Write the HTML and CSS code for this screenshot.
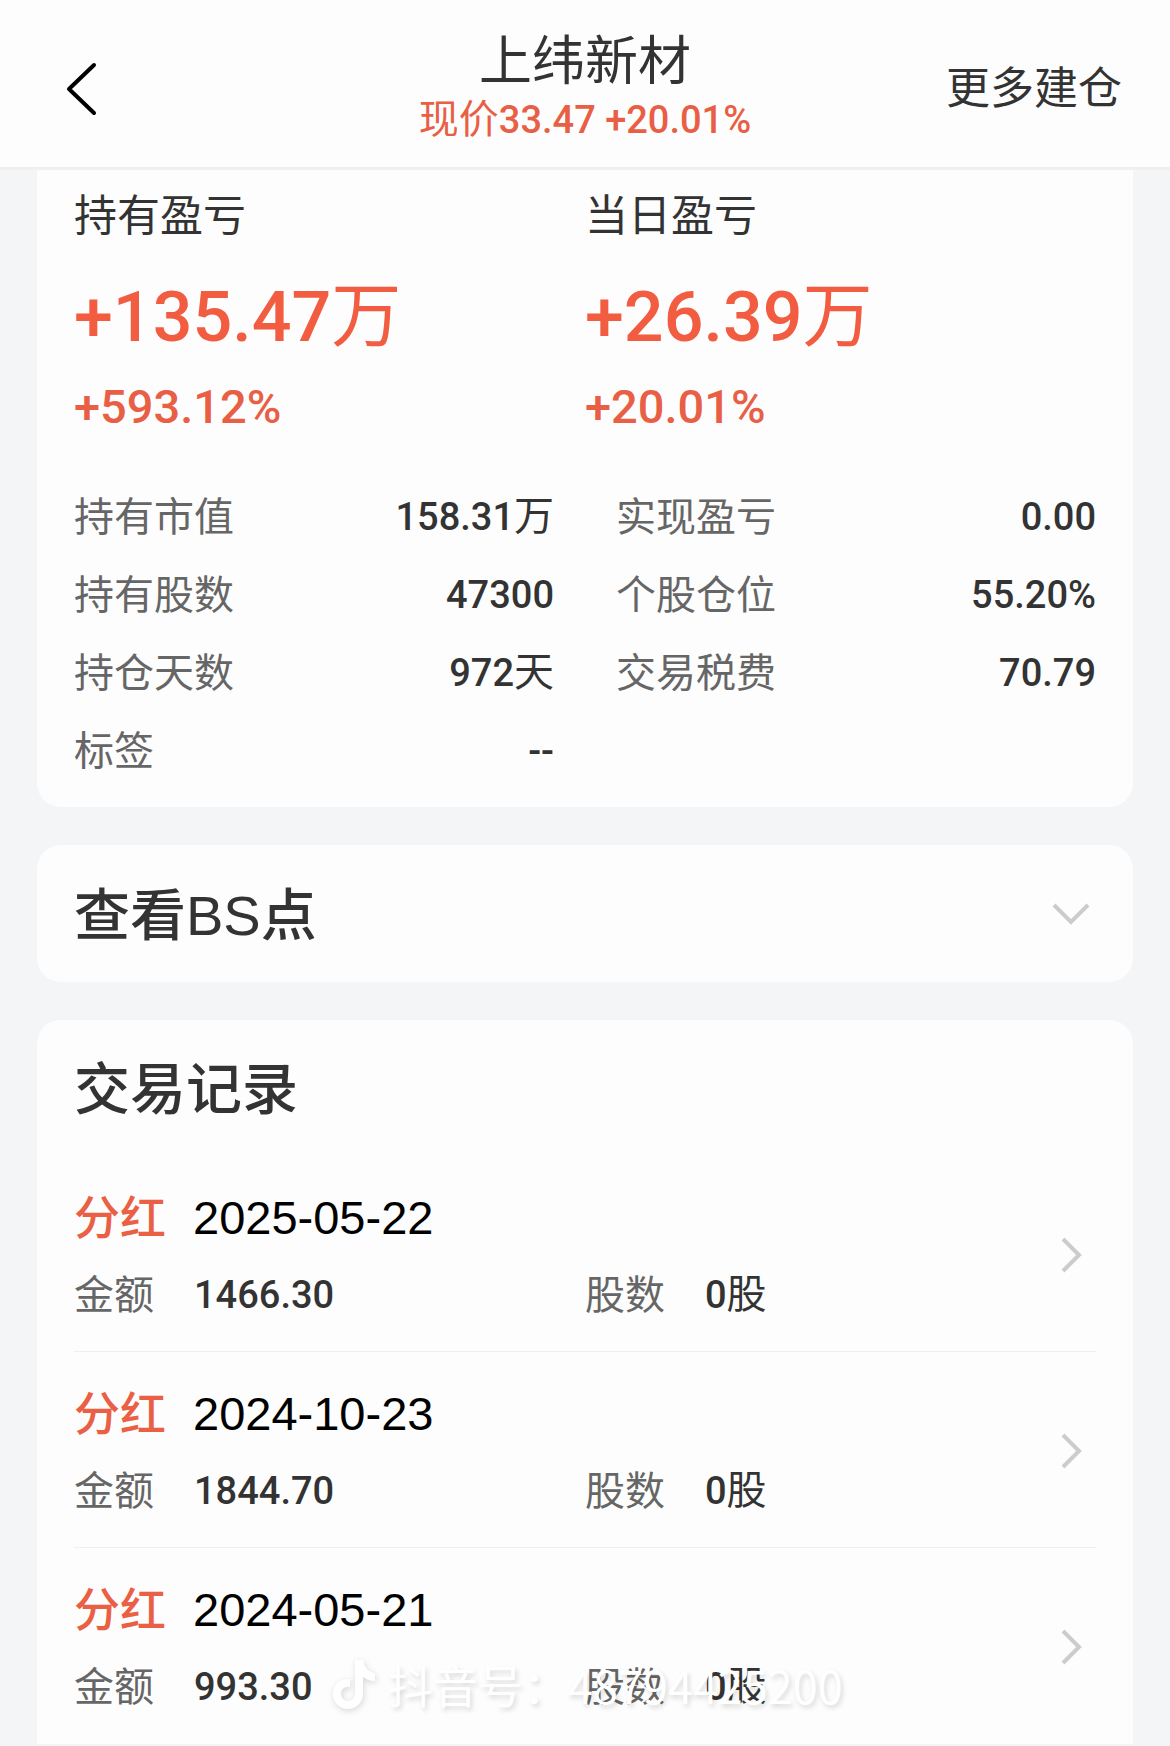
FILE: index.html
```html
<!DOCTYPE html>
<html lang="zh-CN">
<head>
  <meta charset="UTF-8">
  <meta name="viewport" content="width=device-width, initial-scale=1.0">
  <title>上纬新材</title>
  <link rel="stylesheet" href="styles.css">
</head>
<body>
  <header class="navbar">
    <button class="back" type="button" aria-label="返回">
      <svg width="34" height="54" viewBox="0 0 34 54"><path d="M30 3 L5 27 L30 51"/></svg>
    </button>
    <div class="heading">
      <h1>上纬新材</h1>
      <p class="price">现价<span class="num">33.47 +20.01%</span></p>
    </div>
    <button class="more" type="button">更多建仓</button>
  </header>

  <main>
    <section class="card summary">
      <div class="profit">
        <div>
          <h2>持有盈亏</h2>
          <p class="amount">+135.47<span class="unit">万</span></p>
          <p class="rate">+593.12%</p>
        </div>
        <div>
          <h2>当日盈亏</h2>
          <p class="amount">+26.39<span class="unit">万</span></p>
          <p class="rate">+20.01%</p>
        </div>
      </div>
      <dl class="details">
        <div><dt>持有市值</dt><dd>158.31<span class="unit">万</span></dd></div>
        <div><dt>实现盈亏</dt><dd>0.00</dd></div>
        <div><dt>持有股数</dt><dd>47300</dd></div>
        <div><dt>个股仓位</dt><dd>55.20%</dd></div>
        <div><dt>持仓天数</dt><dd>972<span class="unit">天</span></dd></div>
        <div><dt>交易税费</dt><dd>70.79</dd></div>
        <div><dt>标签</dt><dd>--</dd></div>
      </dl>
    </section>

    <button class="card toggle" type="button" aria-expanded="false">
      <span class="card-title">查看BS点</span>
      <svg class="arrow" width="40" height="24" viewBox="0 0 40 24"><path d="M3 3 L20 20 L37 3"/></svg>
    </button>

    <section class="card records">
      <h2 class="card-title">交易记录</h2>
      <ul>
        <li>
          <a href="#">
            <span class="line"><b class="tag">分红</b><time class="date">2025-05-22</time></span>
            <span class="line">
              <span class="pair"><span class="key">金额</span><span class="val">1466.30</span></span>
              <span class="pair"><span class="key">股数</span><span class="val">0<span class="unit">股</span></span></span>
            </span>
            <svg class="arrow" width="24" height="38" viewBox="0 0 24 38"><path d="M4 3 L20 19 L4 35"/></svg>
          </a>
        </li>
        <li>
          <a href="#">
            <span class="line"><b class="tag">分红</b><time class="date">2024-10-23</time></span>
            <span class="line">
              <span class="pair"><span class="key">金额</span><span class="val">1844.70</span></span>
              <span class="pair"><span class="key">股数</span><span class="val">0<span class="unit">股</span></span></span>
            </span>
            <svg class="arrow" width="24" height="38" viewBox="0 0 24 38"><path d="M4 3 L20 19 L4 35"/></svg>
          </a>
        </li>
        <li>
          <a href="#">
            <span class="line"><b class="tag">分红</b><time class="date">2024-05-21</time></span>
            <span class="line">
              <span class="pair"><span class="key">金额</span><span class="val">993.30</span></span>
              <span class="pair"><span class="key">股数</span><span class="val">0<span class="unit">股</span></span></span>
            </span>
            <svg class="arrow" width="24" height="38" viewBox="0 0 24 38"><path d="M4 3 L20 19 L4 35"/></svg>
          </a>
          <!-- 水印 -->
          <div class="watermark">
            <svg width="44" height="52" viewBox="0 0 44 52"><path d="M23 1 H31 C32 8 36 13 43 14 V22 C38 22 34 20 31 18 V34 C31 44 24 50 15.500 50 C7 50 1 43 1 35 C1 26 8 19 18 20 V28 C13 27 9 30 9 35 C9 39 12 42 16 42 C20 42 23 39 23 34 Z"/></svg>
            <span>抖音号：48794425200</span>
          </div>
        </li>
      </ul>
    </section>
  </main>
</body>
</html>
```
FILE: styles.css
```css
* { box-sizing: border-box; }
body {
  margin: 0;
  background: #f3f5f7;
  color: #333;
  font-family: "Liberation Sans", "Noto Sans CJK SC", sans-serif;
}
h1, h2, p, dl, dd, ul { margin: 0; padding: 0; font-weight: 400; }
ul { list-style: none; }
button { border: 0; padding: 0; background: none; color: inherit; font-family: inherit; cursor: pointer; }
svg { display: block; fill: none; }

/* 顶部导航 */
.navbar {
  display: grid;
  grid-template-columns: 1fr auto 1fr;
  align-items: center;
  padding: 32px 48px 23px;
  height: 170px;
  background: #fdfdfd;
  border-bottom: 3px solid #f0f0f1;
}
.heading { text-align: center; }
.navbar h1 { font-size: 53px; line-height: 60px; }
.back { justify-self: start; margin-left: 16px; }
.back svg { stroke: #000; stroke-width: 4; stroke-linecap: round; stroke-linejoin: round; }
.price { color: #e85f45; font-size: 40px; line-height: 54px; }
.num { font-family: Roboto, sans-serif; font-size: 38px; font-weight: 500; line-height: 1; }
.more { justify-self: end; font-size: 44px; line-height: 60px; }

.card {
  display: block;
  margin: 0 37px 38px;
  padding: 0 37px;
  background: #fdfdfd;
  border-radius: 24px;
}
.card-title { font-size: 56px; line-height: 60px; font-weight: 500; }

/* 盈亏 */
.summary { padding-top: 16px; padding-bottom: 17px; border-radius: 0 0 24px 24px; }
.profit { display: grid; grid-template-columns: 1fr 1fr; color: #f25d41; }
.profit h2 { color: #333; font-size: 43px; line-height: 60px; }
.amount, .rate, .details dd, .val { font-family: Roboto, "Noto Sans CJK SC", sans-serif; font-weight: 500; }
.unit { font-weight: 400; line-height: 1; }
.amount { margin-top: 21px; font-size: 70px; line-height: 100px; }
.rate { margin-top: 10px; color: #e85f45; font-size: 47px; line-height: 60px; }
.details { display: grid; grid-template-columns: 1fr 1fr; column-gap: 62px; margin-top: 41px; }
.details div { display: flex; justify-content: space-between; height: 78px; font-size: 40px; line-height: 78px; }
.details dt, .key { color: #666; }
.details dd, .val { font-size: 38px; }
.details .unit, .val .unit { font-size: 40px; }

.toggle {
  display: flex;
  justify-content: space-between;
  align-items: center;
  width: calc(100% - 74px);
  height: 137px;
  padding-right: 42px;
}
.toggle .card-title { padding-top: 4px; }
.arrow { stroke: #ccc; stroke-width: 4; }

/* 交易记录 */
.records { margin-bottom: 0; padding-top: 40px; border-radius: 24px 24px 0 0; }
.records ul { margin-top: 36px; }
.records li { position: relative; border-bottom: 1px solid #f0f0f0; }
.records li:last-child { border-bottom-color: transparent; }
.records a {
  display: grid;
  grid-template-columns: 1fr 24px;
  row-gap: 17px;
  align-items: center;
  padding: 32px 13px 26px 0;
  color: #333;
  text-decoration: none;
}
.records .arrow { grid-column: 2; grid-row: 1 / 3; margin-bottom: 4px; }
.line { display: flex; grid-column: 1; height: 60px; line-height: 60px; margin-right: -37px; }
.tag { width: 119px; color: #ea6045; font-size: 46px; font-weight: 500; }
.date { color: #000; font-size: 47px; }
.pair { display: flex; flex: 1; }
.key { width: 120px; font-size: 40px; }

.watermark {
  position: absolute;
  left: 258px;
  bottom: 28px;
  display: flex;
  align-items: center;
  gap: 12px;
  color: #fff;
  font-family: "Noto Sans CJK SC", sans-serif;
  font-size: 45px;
  line-height: 60px;
  white-space: nowrap;
  text-shadow: 2px 3px 5px rgba(0, 0, 0, 0.15);
  pointer-events: none;
}
.watermark svg { fill: #fff; filter: drop-shadow(1px 2px 3px rgba(0, 0, 0, 0.15)); }
```
